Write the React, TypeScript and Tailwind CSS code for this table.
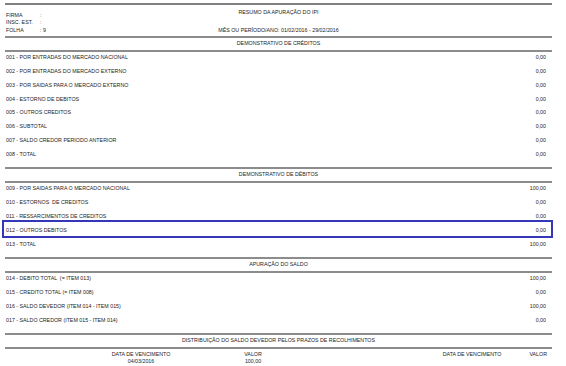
const font = { fontFamily: '"Liberation Sans", Arial, sans-serif' };

type Row = { label: string; value: string; highlight?: boolean };

const creditos: Row[] = [
  { label: '001 - POR ENTRADAS DO MERCADO NACIONAL', value: '0,00' },
  { label: '002 - POR ENTRADAS DO MERCADO EXTERNO', value: '0,00' },
  { label: '003 - POR SAIDAS PARA O MERCADO EXTERNO', value: '0,00' },
  { label: '004 - ESTORNO DE DEBITOS', value: '0,00' },
  { label: '005 - OUTROS CREDITOS', value: '0,00' },
  { label: '006 - SUBTOTAL', value: '0,00' },
  { label: '007 - SALDO CREDOR PERIODO ANTERIOR', value: '0,00' },
  { label: '008 - TOTAL', value: '0,00' },
];

const debitos: Row[] = [
  { label: '009 - POR SAIDAS PARA O MERCADO NACIONAL', value: '100,00' },
  { label: '010 - ESTORNOS  DE CREDITOS', value: '0,00' },
  { label: '011 - RESSARCIMENTOS DE CREDITOS', value: '0,00' },
  { label: '012 - OUTROS DEBITOS', value: '0,00', highlight: true },
  { label: '013 - TOTAL', value: '100,00' },
];

const saldo: Row[] = [
  { label: '014 - DEBITO TOTAL  (= ITEM 013)', value: '100,00' },
  { label: '015 - CREDITO TOTAL (= ITEM 008)', value: '0,00' },
  { label: '016 - SALDO DEVEDOR (ITEM 014 - ITEM 015)', value: '100,00' },
  { label: '017 - SALDO CREDOR (ITEM 015 - ITEM 014)', value: '0,00' },
];

function Heading({ title }: { title: string }) {
  return (
    <div className="flex h-[16px] items-center justify-center border-y-2 border-[#8c8c8c] whitespace-pre">
      {title}
    </div>
  );
}

function Rows({ rows }: { rows: Row[] }) {
  return (
    <div className="flex flex-col pt-[1px] pb-[3.5px]">
      {rows.map((r) => (
        <div key={r.label} className="relative flex h-[13.85px] justify-between pl-[1px] pr-[6px] leading-[8px] whitespace-pre">
          <span>{r.label}</span>
          <span>{r.value}</span>
          {r.highlight && (
            <div className="absolute -left-[3px] -right-[1px] -top-[5.5px] h-[18px] border-2 border-[#3438b8]" />
          )}
        </div>
      ))}
    </div>
  );
}

export default function App() {
  return (
    <div className="h-[366px] w-[566px] overflow-hidden bg-white pt-[3px] text-[5.3px] text-[#222]" style={font}>
      <div className="ml-[5px] mr-[14px] h-[2px] bg-[#808080]" />
      <div className="ml-[5px] mr-[14px]">
        <div className="grid h-[31px] grid-cols-[1fr_auto_1fr]">
          <div className="flex flex-col pt-[6.5px] pl-[1px] leading-[7.5px]">
            <div className="flex"><span className="w-[34px]">FIRMA</span><span>:</span></div>
            <div className="flex"><span className="w-[34px]">INSC. EST.</span><span>:</span></div>
            <div className="flex"><span className="w-[34px]">FOLHA</span><span>: 9</span></div>
          </div>
          <div className="flex flex-col items-center justify-between pt-[3px] pb-[2px] leading-[8px]">
            <span>RESUMO DA APURAÇÃO DO IPI</span>
            <span>MÊS OU PERÍODO/ANO: 01/02/2016 - 29/02/2016</span>
          </div>
          <div />
        </div>
        <Heading title="DEMONSTRATIVO DE CRÉDITOS" />
        <Rows rows={creditos} />
        <Heading title="DEMONSTRATIVO DE DÉBITOS" />
        <Rows rows={debitos} />
        <Heading title="APURAÇÃO DO SALDO" />
        <Rows rows={saldo} />
        <Heading title="DISTRIBUIÇÃO DO SALDO DEVEDOR PELOS PRAZOS DE RECOLHIMENTOS" />
        <div className="flex pt-[2px] leading-[7px]">
          <div className="w-[36px]" />
          <div className="flex w-[200px] flex-col items-center">
            <span>DATA DE VENCIMENTO</span>
            <span>04/03/2016</span>
          </div>
          <div className="flex w-[24px] flex-col items-center">
            <span>VALOR</span>
            <span>100,00</span>
          </div>
          <div className="w-[157px]" />
          <div className="flex w-[100px] flex-col items-center">
            <span>DATA DE VENCIMENTO</span>
          </div>
          <div className="flex w-[25px] flex-col items-end">
            <span>VALOR</span>
          </div>
        </div>
      </div>
    </div>
  );
}
